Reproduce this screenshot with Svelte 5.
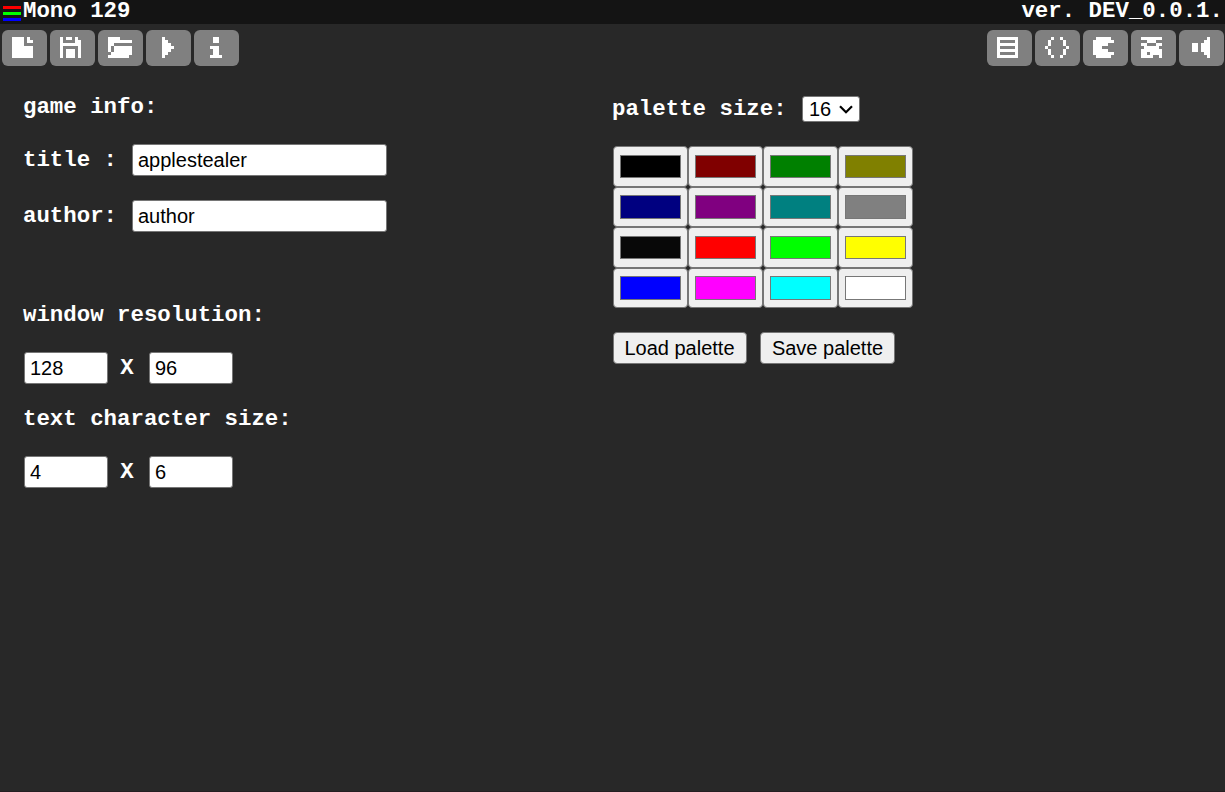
<script>
  const icons = {
    page: ['####.#..', '####.##.', '####....', '#######.', '#######.', '#######.', '#######.'],
    save: ['#.##.#..', '#....##.', '#######.', '#.....#.', '#.###.#.', '#.###.#.', '#.###.#.'],
    open: ['####....', '########', '##......', '#.######', '#.######', '.#######', '#######.'],
    play: ['..#.....', '..##....', '..###...', '..####..', '..###...', '..##....', '..#.....'],
    info: ['...##...', '...##...', '........', '..###...', '...##...', '...##...', '..####..'],
    list: ['#######.', '#.....#.', '#######.', '#.....#.', '#######.', '#.....#.', '#######.'],
    code: ['..#..#..', '.#....#.', '.#....#.', '#......#', '.#....#.', '.#....#.', '..#..#..'],
    sprite: ['.#####..', '#######.', '#####...', '###.....', '#####...', '#######.', '.#####..'],
    map: ['#######.', '..###...', '##...##.', '.#####..', '#######.', '##.####.', '####..#.'],
    sound: ['......#.', '.....##.', '.##.###.', '.##.###.', '.##.###.', '.....##.', '......#.']
  };

  const cells = (rows) =>
    rows.flatMap((row, y) => [...row].map((c, x) => (c === '#' ? `M${x} ${y}h1v1h-1z` : ''))).join('');

  const left = ['page', 'save', 'open', 'play', 'info'];
  const right = ['list', 'code', 'sprite', 'map', 'sound'];
  const palette = [
    '#000000', '#800000', '#008000', '#808000',
    '#000080', '#800080', '#008080', '#808080',
    '#080808', '#ff0000', '#00ff00', '#ffff00',
    '#0000ff', '#ff00ff', '#00ffff', '#ffffff'
  ];
</script>

{#snippet tool(name)}
  <button class="tool" aria-label={name}>
    <svg width="24" height="21" viewBox="0 0 8 7" shape-rendering="crispEdges"><path d={cells(icons[name])} fill="#fff" /></svg>
  </button>
{/snippet}

<div class="app">
  <header>
    <div class="brand">
      <div class="logo"><i class="r"></i><i class="g"></i><i class="b"></i></div>
      <span>Mono 129</span>
    </div>
    <span>ver. DEV_0.0.1.</span>
  </header>
  <nav>
    <div class="group">{#each left as n}{@render tool(n)}{/each}</div>
    <div class="group">{#each right as n}{@render tool(n)}{/each}</div>
  </nav>
  <main>
    <section class="info">
      <div class="label">game info:</div>
      <div class="row title"><label for="t">title :</label><input id="t" class="wide" value="applestealer" /></div>
      <div class="row author"><label for="a">author:</label><input id="a" class="wide" value="author" /></div>
      <div class="label">window resolution:</div>
      <div class="row dims"><input value="128" /><span>X</span><input value="96" /></div>
      <div class="label">text character size:</div>
      <div class="row dims"><input value="4" /><span>X</span><input value="6" /></div>
    </section>
    <section class="colors">
      <div class="row size">
        <span>palette size:</span>
        <button class="select">16
          <svg width="14" height="9" viewBox="0 0 14 9"><path d="M1 1.2 7 7.2 13 1.2" fill="none" stroke="#000" stroke-width="2.2" /></svg>
        </button>
      </div>
      <div class="grid">
        {#each palette as c, i}
          <div class="cell" class:tall={Math.floor(i / 4) % 2 === 0}><div class="swatch" style="background:{c}"></div></div>
        {/each}
      </div>
      <div class="actions"><button>Load palette</button><button>Save palette</button></div>
    </section>
  </main>
</div>

<style>
  :global(body) { margin: 0; background: #282828; overflow: hidden; }
  .app {
    height: 792px;
    box-sizing: border-box;
    background: #282828;
    border-bottom: 1px solid #241e21;
    color: #fff;
    font: bold 22.4px/24px "Liberation Mono", monospace;
  }
  header { height: 24px; background: #141414; display: flex; justify-content: space-between; padding: 0 2px 0 3px; }
  header span { height: 22px; line-height: 22px; }
  .brand { display: flex; gap: 2px; }
  .logo { width: 18px; display: flex; flex-direction: column; gap: 3px; padding-top: 6px; }
  .logo i { height: 3px; }
  .r { background: #f00; }
  .g { background: #0f0; }
  .b { background: #00f; }
  nav { height: 48px; display: flex; justify-content: space-between; padding: 6px 1px 0 2px; box-sizing: border-box; }
  .group { display: flex; gap: 3px; }
  .tool { width: 45px; height: 36px; box-sizing: border-box; border: 0; border-radius: 6px; background: #808080; padding: 7px 0 0 10px; display: flex; align-items: flex-start; }
  main { display: grid; grid-template-columns: 588px 1fr; padding: 0 0 0 24px; }
  .info { padding-top: 23px; }
  .label, .row label { margin-left: -1px; }
  .label { height: 24px; }
  .row { display: flex; align-items: center; }
  .title { margin-top: 25px; height: 32px; }
  .author { margin: 24px 0 71px; height: 32px; }
  .dims { margin: 25px 0 23px; height: 32px; }
  .row label { width: 109px; padding-bottom: 1px; }
  .dims span { width: 41px; text-align: center; box-sizing: border-box; padding-right: 3px; }
  input {
    width: 84px; height: 32px; box-sizing: border-box; border: 1px solid #767676; border-radius: 3px;
    padding: 1px 5px; background: #fff; color: #000; font: 20px "Liberation Sans", Arial, sans-serif; outline: 0;
  }
  .wide { width: 255px; }
  .colors { padding-top: 24px; }
  .size { height: 26px; }
  .size > span { width: 190px; }
  .select {
    width: 58px; height: 26px; box-sizing: border-box; border: 1px solid #767676; border-radius: 3px; background: #fff;
    display: flex; align-items: center; justify-content: space-between; padding: 0 6px 0 6px;
    color: #000; font: 20px "Liberation Sans", Arial, sans-serif;
  }
  .grid { margin: 24px 0 0 1px; display: grid; grid-template-columns: repeat(4, 75px); grid-template-rows: 41px 40px 41px 40px; width: 300px; }
  .cell { box-sizing: border-box; border: 1px solid #767676; border-radius: 4px; background: #efefef; padding: 7px 6px; }
  .cell.tall { padding: 8px 6px; }
  .swatch { height: 100%; box-sizing: border-box; border: 1px solid #777; }
  .actions { margin: 24px 0 0 1px; display: flex; gap: 13px; }
  .actions button {
    width: 134px; height: 32px; box-sizing: border-box; border: 1px solid #767676; border-radius: 4px; background: #efefef;
    padding: 0 1px 0 0; color: #000; font: 20px "Liberation Sans", Arial, sans-serif;
  }
  .actions button + button { width: 135px; padding: 0; }
</style>
